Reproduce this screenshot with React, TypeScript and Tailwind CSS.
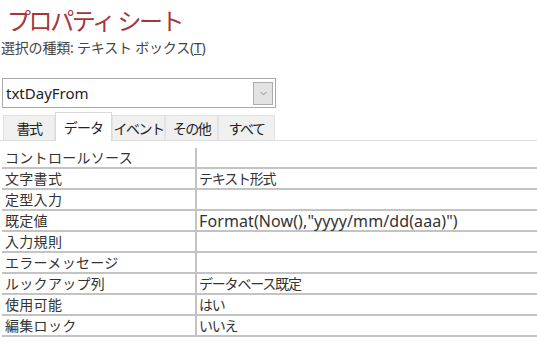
import { ChevronDown } from "lucide-react";

const FONT = "font-['Noto_Sans','Noto_Sans_CJK_JP',sans-serif]";

const ROWS: [string, string][] = [
  ["コントロールソース", ""],
  ["文字書式", "テキスト形式"],
  ["定型入力", ""],
  ["既定値", 'Format(Now(),"yyyy/mm/dd(aaa)")'],
  ["入力規則", ""],
  ["エラーメッセージ", ""],
  ["ルックアップ列", "データベース既定"],
  ["使用可能", "はい"],
  ["編集ロック", "いいえ"],
];

const TABS: [string, string][] = [
  ["書式", "w-[52px]"],
  ["データ", "w-[57px]"],
  ["イベント", "w-[53px]"],
  ["その他", "w-[53px]"],
  ["すべて", "w-[57px]"],
];

export default function App() {
  return (
    <div className={`${FONT} relative h-[347px] w-[537px] overflow-hidden bg-white text-[#333]`}>
      <h1 className="whitespace-nowrap pl-[7px] pt-[5px] text-[24px] leading-[31px] tracking-[-2.4px] text-[#a4373a]">
        プロパティ シート
      </h1>
      <p className="whitespace-nowrap pl-[1px] pt-[2px] text-[14px] leading-[20px] tracking-[-0.2px] text-[#444]">
        選択の種類: テキスト ボックス(<span className="underline">T</span>)
      </p>

      {/* object picker */}
      <div className="ml-[2px] mt-[20px] flex h-[30px] w-[274px] items-center justify-between border border-[#a9a9a9] pl-[3px] pr-[2px]">
        <span className="text-[15px] leading-none text-[#222]">txtDayFrom</span>
        <span className="flex h-[23px] w-[20px] items-center justify-center border border-[#adadad] bg-[#e3e3e3]">
          <ChevronDown size={11} strokeWidth={1.3} className="text-[#555]" />
        </span>
      </div>

      {/* tabs */}
      <div className="mt-[5px] flex h-[28px] items-end border-b border-[#dedede] pl-[3px]">
        {TABS.map(([t, w], i) =>
          i === 1 ? (
            <div
              key={t}
              className={`-mb-px flex h-[29px] items-center justify-center whitespace-nowrap border-x border-t border-[#d9d9d9] bg-white text-[14px] tracking-[-0.8px] text-[#222] ${w}`}
            >
              {t}
            </div>
          ) : (
            <div
              key={t}
              className={`flex h-[25px] items-center justify-center whitespace-nowrap border border-b-0 border-[#e3e3e3] bg-[#f0f0f0] text-[14px] tracking-[-1.5px] text-[#222] ${w}`}
            >
              {t}
            </div>
          )
        )}
      </div>

      {/* property grid */}
      <div className="ml-[2px] mt-[7px]">
        {ROWS.map(([k, v]) => (
          <div key={k} className="flex h-[21px] border-b-2 border-[#c3c3c3] leading-[19px]">
            <div className="w-[193px] whitespace-nowrap pl-[3px] text-[14px] tracking-[0.3px] text-[#333]">{k}</div>
            <div className="w-[2px] bg-[#c3c3c3]" />
            <div
              className={`flex-1 whitespace-nowrap pl-[2px] text-[#333] ${
                v.startsWith("Format") ? "text-[16px] leading-[20px] tracking-[0.1px]" : "text-[14px] tracking-[-1.2px]"
              }`}
            >
              {v}
            </div>
          </div>
        ))}
      </div>
    </div>
  );
}
